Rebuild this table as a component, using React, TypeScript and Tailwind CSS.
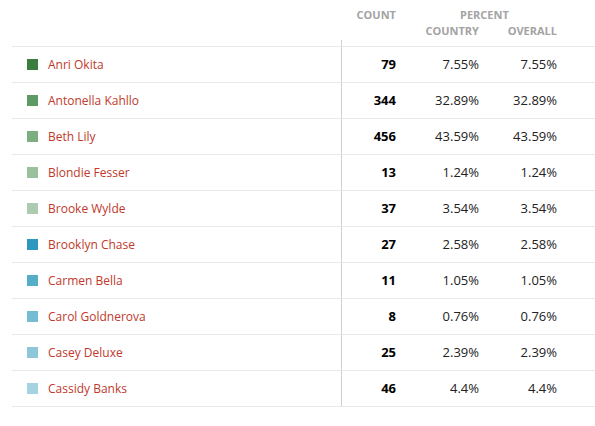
import React from 'react';

type Row = {
  name: string;
  color: string;
  count: number;
  country: string;
  overall: string;
};

const rows: Row[] = [
  { name: 'Anri Okita', color: '#3a7d3e', count: 79, country: '7.55%', overall: '7.55%' },
  { name: 'Antonella Kahllo', color: '#5e9a63', count: 344, country: '32.89%', overall: '32.89%' },
  { name: 'Beth Lily', color: '#7dae80', count: 456, country: '43.59%', overall: '43.59%' },
  { name: 'Blondie Fesser', color: '#9bc09d', count: 13, country: '1.24%', overall: '1.24%' },
  { name: 'Brooke Wylde', color: '#adcbb0', count: 37, country: '3.54%', overall: '3.54%' },
  { name: 'Brooklyn Chase', color: '#2e97bf', count: 27, country: '2.58%', overall: '2.58%' },
  { name: 'Carmen Bella', color: '#54aec8', count: 11, country: '1.05%', overall: '1.05%' },
  { name: 'Carol Goldnerova', color: '#76bcd3', count: 8, country: '0.76%', overall: '0.76%' },
  { name: 'Casey Deluxe', color: '#8fc7da', count: 25, country: '2.39%', overall: '2.39%' },
  { name: 'Cassidy Banks', color: '#a6d3e1', count: 46, country: '4.4%', overall: '4.4%' },
];

const App = () => {
  return (
    <div className="w-[595px] h-[426px] bg-white font-['Open_Sans',sans-serif] text-[13px] overflow-hidden">
      <div className="ml-3 pt-[9px]">
        {/* header */}
        <div className="flex text-[11px] font-bold text-[#a3a3a3] uppercase leading-[12px]">
          <div className="w-[329px]" />
          <div className="w-[55px] text-right">Count</div>
          <div className="w-[161px] pl-[64px]">Percent</div>
        </div>
        <div className="flex text-[11px] font-bold text-[#a3a3a3] uppercase leading-[12px] mt-[4px]">
          <div className="w-[329px]" />
          <div className="w-[55px]" />
          <div className="w-[83px] text-right">Country</div>
          <div className="w-[78px] text-right">Overall</div>
        </div>
        <div className="flex h-[9px]">
          <div className="w-[329px]" />
          <div className="mt-[3px] border-l border-[#cfcfcf]" />
        </div>

        {/* rows */}
        <div className="border-b border-[#e8e8e8]">
          {rows.map((r) => (
            <div key={r.name} className="flex h-[36px] border-t border-[#e8e8e8]">
              <div className="w-[329px] flex items-center pl-[15px] gap-[10px]">
                <span className="w-[11px] h-[11px] shrink-0" style={{ backgroundColor: r.color }} />
                <span className="text-[12px] text-[#c0392b]">{r.name}</span>
              </div>
              <div className="w-[55px] flex items-center justify-end border-l border-[#cfcfcf] font-bold text-black">
                {r.count}
              </div>
              <div className="w-[83px] flex items-center justify-end text-[#222]">{r.country}</div>
              <div className="w-[78px] flex items-center justify-end text-[#222]">{r.overall}</div>
            </div>
          ))}
        </div>
      </div>
    </div>
  );
};

export default App;
